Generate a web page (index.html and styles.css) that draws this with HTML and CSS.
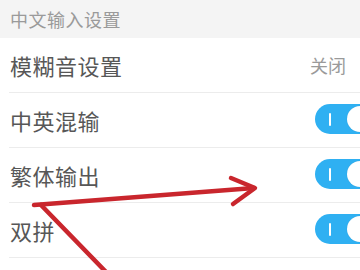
FILE: index.html
```html
<!DOCTYPE html>
<html lang="zh">
<head>
<meta charset="utf-8">
<link rel="stylesheet" href="styles.css">
</head>
<body>
<div class="screen">
  <div class="section-title">中文输入设置</div>
  <ul class="list">
    <li class="row"><span class="label">模糊音设置</span><span class="value">关闭</span></li>
    <li class="row"><span class="label">中英混输</span><span class="toggle on"><span class="bar"></span><span class="knob"></span></span></li>
    <li class="row"><span class="label">繁体输出</span><span class="toggle on"><span class="bar"></span><span class="knob"></span></span></li>
    <li class="row"><span class="label">双拼</span><span class="toggle on"><span class="bar"></span><span class="knob"></span></span></li>
    <li class="row"><span class="label"></span><span class="toggle off"><span class="knob"></span></span></li>
  </ul>
  <svg class="annot" width="360" height="270" viewBox="0 0 360 270">
    <g fill="none" stroke="#c9262d" stroke-width="4.5" stroke-linecap="round" stroke-linejoin="round">
      <path d="M34 205 L254 188"/>
      <path d="M231 178 L255 188 L233 204"/>
      <path d="M41 205 L106 272"/>
    </g>
  </svg>
</div>
</body>
</html>
```
FILE: styles.css
```css
html, body {
  margin: 0;
  padding: 0;
  background: #ffffff;
}
.screen {
  position: relative;
  width: 360px;
  height: 270px;
  overflow: hidden;
  font-family: "Noto Sans CJK SC", "Noto Sans", sans-serif;
}
.section-title {
  height: 38px;
  line-height: 38px;
  background: #f4f4f4;
  color: #9a9a9a;
  font-size: 18px;
  padding-left: 10px;
  letter-spacing: 0.5px;
}
.list {
  list-style: none;
  margin: 0;
  padding: 0;
}
.row {
  display: flex;
  align-items: center;
  justify-content: space-between;
  height: 54px;
  margin-left: 9px;
  padding-left: 1px;
  border-bottom: 1px solid #ececec;
}
.label {
  font-size: 22px;
  color: #575757;
  letter-spacing: 0.5px;
}
.value {
  font-size: 18px;
  color: #9a9a9a;
  margin-right: 14px;
}
.toggle {
  position: relative;
  display: flex;
  align-items: center;
  width: 60px;
  height: 30px;
  border-radius: 15px;
  margin-right: -15px;
  margin-top: -2px;
  box-sizing: border-box;
}
.toggle.on {
  background: #2fb0f2;
}
.toggle.off {
  background: #e2e2e2;
  margin-top: 4px;
}
.bar {
  width: 2px;
  height: 13px;
  background: #ffffff;
  margin-left: 14px;
  border-radius: 1px;
}
.knob {
  position: absolute;
  right: 2px;
  top: 2px;
  width: 26px;
  height: 26px;
  border-radius: 50%;
  background: #ffffff;
  box-shadow: 0 0 1px rgba(0,0,0,0.15);
}
.annot {
  position: absolute;
  left: 0;
  top: 0;
  pointer-events: none;
}
```
